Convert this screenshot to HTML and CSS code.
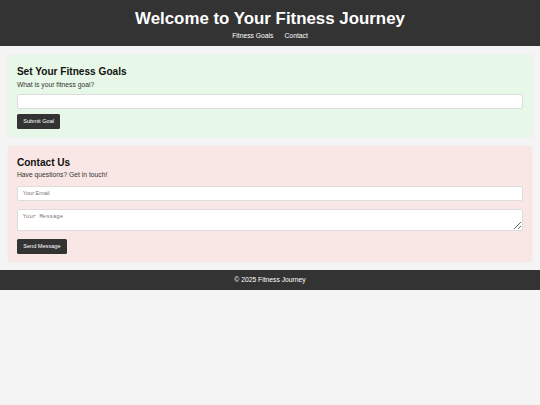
FILE: index.html
```html
<!DOCTYPE html>
<html lang="en">
<head>
<meta charset="utf-8">
<title>Fitness Journey</title>
<link rel="stylesheet" href="styles.css">
</head>
<body>
<header class="site-header">
  <h1 class="site-title">Welcome to Your Fitness Journey</h1>
  <nav class="site-nav">
    <a href="#goals" class="nav-link">Fitness Goals</a>
    <a href="#contact" class="nav-link">Contact</a>
  </nav>
</header>
<main class="content">
  <section id="goals" class="card card-goals">
    <h2 class="card-title">Set Your Fitness Goals</h2>
    <label class="field-label" for="goal">What is your fitness goal?</label>
    <input class="field field-goal" id="goal" type="text">
    <button class="btn btn-goal" type="button">Submit Goal</button>
  </section>
  <section id="contact" class="card card-contact">
    <h2 class="card-title">Contact Us</h2>
    <p class="card-text">Have questions? Get in touch!</p>
    <input class="field field-email" type="email" placeholder="Your Email">
    <textarea class="field field-message" placeholder="Your Message"></textarea>
    <button class="btn btn-send" type="button">Send Message</button>
  </section>
</main>
<footer class="site-footer">
  <p class="footer-text">&copy; 2025 Fitness Journey</p>
</footer>
</body>
</html>
```
FILE: styles.css
```css
* { box-sizing: border-box; }

html, body {
  margin: 0;
  padding: 0;
}

body {
  background: #f4f4f4;
  font-family: "Liberation Sans", Arial, sans-serif;
  color: #333;
}

.site-header {
  background: #333;
  color: #fff;
  text-align: center;
  padding: 8.5px 0 6.6px;
}

.site-title {
  margin: 0;
  font-size: 16.875px;
  line-height: 19.4px;
  font-weight: bold;
}

.site-nav {
  margin-top: 4.1px;
  display: flex;
  justify-content: center;
  gap: 11px;
  font-size: 6.75px;
  line-height: 7.76px;
}

.nav-link {
  color: #fff;
  text-decoration: none;
}

.content {
  display: flex;
  flex-direction: column;
  gap: 8.6px;
  padding: 8.44px;
}

.card {
  display: flex;
  flex-direction: column;
  align-items: flex-start;
  padding: 8.44px;
  border-radius: 2px;
  box-shadow: 0 0 2px rgba(0, 0, 0, 0.07);
}

.card-goals { background: #e8f8e8; }
.card-contact { background: #f9e7e5; }

.card-title {
  margin: 2.7px 0 0;
  font-size: 10.125px;
  line-height: 11.64px;
  font-weight: bold;
  color: #111;
}

.field-label {
  margin-top: 3px;
  font-size: 6.75px;
  line-height: 7.76px;
}

.card-text {
  margin: 2.8px 0 0;
  font-size: 6.75px;
  line-height: 7.76px;
}

.field {
  display: block;
  width: 100%;
  background: #fff;
  border: 1px solid #dcdcdc;
  border-radius: 2px;
  padding: 0 4.8px;
  font-family: "Liberation Sans", Arial, sans-serif;
  font-size: 5.625px;
  color: #111;
  outline: none;
}

.field::placeholder { color: #777; }

.field-goal {
  margin-top: 5.5px;
  height: 15px;
}

.field-email {
  margin-top: 6.7px;
  height: 15.5px;
}

.field-message {
  margin-top: 8px;
  height: 22px;
  padding: 4px 4.8px;
  font-family: "Liberation Mono", "Courier New", monospace;
  font-size: 5.625px;
  line-height: 6.5px;
  resize: vertical;
}

.btn {
  display: block;
  height: 15px;
  padding: 0 6.3px;
  background: #333;
  color: #fff;
  border: none;
  border-radius: 1.5px;
  font-family: "Liberation Sans", Arial, sans-serif;
  font-size: 5.625px;
  line-height: 15px;
  cursor: pointer;
}

.btn-goal { margin-top: 4.7px; }
.btn-send { margin-top: 7.5px; }

.site-footer {
  background: #333;
  color: #fff;
  text-align: center;
  padding: 5.8px 0;
}

.footer-text {
  margin: 0;
  font-size: 6.75px;
  line-height: 7.76px;
}
```
